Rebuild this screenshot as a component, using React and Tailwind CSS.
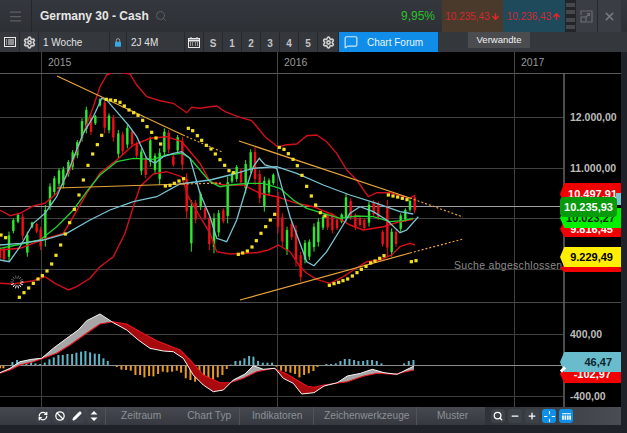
import { Menu, Search, Settings, MessageSquare, ArrowDown, ArrowUp, RefreshCw, Ban, Pencil, X, Minus, Plus } from 'lucide-react';

// chart data was read off 3x crops, so coords are crop px: left crop starts at x=0, right one at x=210
const L = (pts) => pts.map(([x, y]) => [x / 3, y / 3 + 70]);
const R = (pts) => pts.map(([x, y]) => [x / 3 + 210, y / 3 + 70]);
const P = (pts) => pts.map(([x, y]) => `${x.toFixed(1)},${y.toFixed(1)}`).join(' ');

const upper = [...L([[0, 420], [30, 437], [60, 430], [100, 408], [135, 400], [170, 370], [210, 300], [250, 190], [280, 110], [300, 50], [320, 15], [345, 5], [390, 12], [410, 45], [440, 80], [480, 92], [520, 100], [560, 128], [575, 112], [600, 115]]), ...R([[0, 110], [20, 108], [45, 125], [90, 142], [125, 152], [165, 200], [205, 232], [225, 225], [260, 222], [290, 197], [320, 195], [350, 215], [380, 250], [410, 300], [440, 330], [475, 380], [500, 368], [540, 368], [600, 385], [615, 375]])];
const lower = [...L([[0, 640], [40, 642], [100, 632], [135, 620], [165, 640], [205, 660], [230, 650], [270, 625], [300, 590], [340, 560], [375, 490], [400, 410], [420, 350], [460, 312], [500, 305], [545, 320], [565, 380], [600, 440]]), ...R([[0, 490], [20, 545], [60, 552], [100, 550], [140, 548], [175, 540], [205, 525], [240, 545], [270, 590], [290, 610], [320, 628], [360, 640], [400, 620], [430, 600], [470, 575], [510, 570], [545, 555], [570, 530], [600, 520], [615, 525]])];
const middle = [...L([[0, 540], [60, 535], [125, 510], [190, 490], [220, 440], [260, 370], [300, 310], [350, 270], [400, 225], [450, 205], [500, 200], [545, 215], [600, 280]]), ...R([[0, 335], [40, 345], [100, 345], [150, 370], [200, 380], [260, 400], [310, 410], [370, 435], [420, 465], [460, 480], [520, 470], [570, 455], [610, 448]])];
const green = [...L([[0, 535], [50, 525], [120, 510], [170, 470], [220, 420], [260, 365], [300, 315], [350, 275], [400, 265], [460, 268], [500, 255], [545, 250], [570, 265], [600, 300]]), ...R([[0, 335], [30, 350], [60, 345], [110, 340], [160, 340], [210, 355], [250, 390], [290, 415], [340, 430], [390, 445], [440, 438], [490, 440], [540, 455], [580, 452], [610, 445]])];
const fast = [...L([[0, 570], [28, 575], [60, 530], [100, 460], [135, 430], [170, 380], [210, 290], [250, 190], [280, 140], [305, 85], [320, 90], [350, 125], [385, 165], [410, 200], [440, 265], [465, 280], [490, 260], [520, 250], [545, 245], [570, 265], [600, 370]]), ...R([[0, 440], [20, 505], [50, 515], [80, 450], [110, 350], [130, 290], [148, 265], [165, 285], [200, 295], [215, 350], [240, 440], [270, 520], [290, 575], [312, 587], [350, 545], [390, 480], [420, 430], [450, 410], [490, 425], [530, 450], [570, 488], [590, 480], [625, 440]])];
const slow = [...L([[0, 525], [60, 520], [130, 510], [200, 490], [270, 450], [330, 420], [400, 395], [470, 380], [540, 342]]), ...R([[0, 330], [60, 315], [130, 295], [200, 290], [260, 310], [340, 345], [420, 375], [500, 400], [570, 425], [610, 432]])];

// x, top, bottom, g/r
const candles = [
  ...[[0, 530, 570, 'r'], [12, 530, 575, 'r'], [27, 485, 575, 'g'], [40, 445, 490, 'g'], [54, 430, 460, 'g'], [68, 430, 510, 'r'], [82, 485, 560, 'g'], [96, 455, 475, 'g'], [110, 458, 490, 'r'], [122, 470, 540, 'r'], [136, 405, 530, 'g'], [150, 340, 420, 'g'], [163, 318, 375, 'g'], [177, 295, 350, 'g'], [190, 290, 355, 'g'], [205, 270, 320, 'g'], [218, 240, 300, 'g'], [232, 210, 265, 'g'], [246, 145, 215, 'g'], [259, 110, 190, 'g'], [273, 135, 195, 'r'], [286, 135, 165, 'g'], [300, 85, 110, 'g'], [314, 85, 190, 'r'], [327, 130, 190, 'g'], [340, 135, 215, 'r'], [355, 180, 265, 'g'], [368, 185, 255, 'r'], [382, 165, 235, 'g'], [396, 180, 230, 'r'], [410, 215, 265, 'r'], [424, 235, 315, 'g'], [437, 260, 325, 'r'], [451, 200, 290, 'g'], [465, 250, 310, 'g'], [479, 235, 345, 'g'], [493, 175, 260, 'g'], [506, 180, 250, 'r'], [520, 255, 290, 'r'], [533, 195, 250, 'g'], [547, 200, 300, 'r'], [560, 310, 445, 'r'], [574, 390, 545, 'g'], [587, 390, 460, 'r'], [602, 365, 420, 'g'], [615, 410, 450, 'r'], [628, 430, 540, 'r']].map(([x, t, b, c]) => [x / 3, t / 3 + 70, b / 3 + 70, c]),
  ...[[12, 430, 550, 'g'], [26, 420, 500, 'g'], [40, 415, 460, 'r'], [53, 320, 460, 'g'], [66, 305, 340, 'g'], [80, 285, 335, 'g'], [93, 295, 345, 'r'], [107, 270, 370, 'g'], [122, 238, 310, 'g'], [135, 232, 345, 'r'], [149, 300, 400, 'r'], [163, 320, 425, 'g'], [177, 325, 375, 'g'], [190, 310, 345, 'g'], [204, 365, 490, 'r'], [217, 430, 530, 'r'], [231, 470, 555, 'g'], [245, 455, 510, 'r'], [258, 465, 590, 'r'], [272, 545, 635, 'r'], [285, 510, 580, 'g'], [298, 508, 570, 'g'], [312, 460, 545, 'g'], [325, 445, 530, 'g'], [339, 435, 480, 'g'], [353, 430, 480, 'r'], [367, 430, 490, 'r'], [381, 445, 480, 'r'], [395, 430, 460, 'g'], [408, 372, 455, 'g'], [422, 385, 450, 'r'], [436, 430, 480, 'r'], [450, 440, 470, 'r'], [463, 445, 480, 'r'], [477, 395, 470, 'g'], [491, 390, 440, 'r'], [505, 395, 450, 'r'], [518, 480, 530, 'r'], [532, 390, 560, 'r'], [545, 475, 560, 'g'], [558, 480, 530, 'r'], [572, 430, 485, 'g'], [586, 415, 455, 'g'], [600, 388, 425, 'g'], [614, 375, 430, 'r']].map(([x, t, b, c]) => [x / 3 + 210, t / 3 + 70, b / 3 + 70, c]),
];

const dots = [
  ...L([[3, 495], [17, 503], [58, 682], [72, 668], [86, 654], [100, 640], [114, 627], [127, 617], [141, 603], [155, 582], [168, 556], [182, 525], [196, 492], [209, 458], [223, 418], [237, 375], [250, 330], [264, 286], [278, 252], [292, 224], [305, 196], [319, 88], [332, 90], [346, 92], [360, 97], [373, 108], [387, 120], [401, 128], [414, 136], [428, 151], [441, 170], [455, 187], [468, 204], [482, 222], [496, 348], [510, 346], [523, 340], [537, 333], [551, 326], [565, 175], [578, 182], [592, 197], [605, 211], [619, 226]]),
  ...R([[3, 237], [16, 252], [30, 269], [44, 286], [57, 302], [71, 308], [85, 553], [98, 549], [112, 543], [126, 531], [139, 512], [153, 490], [167, 470], [181, 450], [194, 433], [208, 232], [222, 238], [235, 251], [249, 268], [262, 287], [276, 316], [290, 349], [304, 378], [317, 405], [331, 428], [345, 438], [358, 646], [372, 641], [386, 637], [399, 632], [413, 627], [427, 618], [441, 608], [454, 598], [468, 589], [482, 579], [495, 573], [509, 565], [522, 557], [535, 375], [549, 378], [563, 381], [577, 385], [591, 389], [604, 575], [618, 572]]),
];

// MACD crops: x/3, y/3+300, second crop continues at 942
const M = (pts) => pts.map(([x, y]) => [x / 3, y / 3 + 300]);
const macd = M([[0, 218], [30, 205], [60, 185], [95, 178], [125, 175], [160, 145], [200, 115], [235, 90], [260, 62], [300, 42], [340, 68], [380, 90], [415, 120], [450, 145], [490, 153], [520, 155], [550, 175], [580, 225], [610, 255], [640, 275], [670, 270], [700, 240], [735, 222], [760, 197], [790, 208], [825, 205], [850, 235], [880, 250], [905, 282], [942, 278], [972, 258], [1012, 248], [1042, 228], [1082, 220], [1117, 208], [1152, 218], [1192, 223], [1242, 198]]);
const signal = M([[0, 220], [30, 210], [60, 195], [100, 185], [130, 175], [170, 160], [210, 135], [260, 100], [300, 72], [340, 65], [380, 72], [420, 95], [470, 122], [540, 150], [570, 180], [610, 225], [660, 248], [690, 248], [730, 235], [770, 215], [820, 205], [860, 222], [890, 240], [920, 258], [942, 262], [972, 255], [1042, 245], [1092, 228], [1132, 220], [1182, 223], [1242, 210]]);

const blueBars = [[37, 186], [51, 180], [65, 183], [79, 185], [93, 185], [106, 190], [120, 192], [134, 188], [148, 178], [161, 172], [175, 165], [188, 165], [202, 162], [216, 162], [229, 158], [243, 155], [256, 153], [270, 157], [284, 161], [297, 162], [310, 175], [323, 183], [693, 194], [706, 183], [720, 182], [733, 175], [747, 168], [760, 170], [774, 183], [788, 188], [802, 188], [816, 188], [979, 192], [993, 192], [1007, 190], [1021, 183], [1034, 177], [1048, 177], [1062, 180], [1075, 183], [1089, 183], [1102, 180], [1116, 180], [1130, 183], [1144, 190], [1212, 190], [1226, 183], [1240, 180]];
const orangeBars = [[0, 205], [10, 205], [350, 201], [364, 209], [378, 210], [392, 212], [406, 225], [420, 225], [433, 232], [447, 228], [460, 229], [474, 222], [488, 215], [502, 217], [516, 215], [530, 212], [543, 218], [557, 235], [571, 240], [585, 245], [598, 240], [612, 240], [625, 245], [639, 245], [653, 232], [667, 225], [680, 207], [829, 200], [843, 212], [857, 215], [871, 218], [885, 222], [898, 232], [912, 225], [926, 220], [940, 213], [952, 201]];

const ChartDrawing = () => (
  <svg viewBox="0 73 621 334" className="block w-[621px] h-[334px]">
    <defs>
      <clipPath id="macdGray">
        <rect x="0" y="300" width="113" height="110" />
        <rect x="232" y="300" width="42" height="110" />
        <rect x="337" y="300" width="100" height="110" />
      </clipPath>
      <clipPath id="macdRed">
        <rect x="113" y="300" width="119" height="110" />
        <rect x="274" y="300" width="63" height="110" />
      </clipPath>
    </defs>

    {[117, 168, 218, 269, 334, 396].map((y) => <line key={y} x1="0" x2="564" y1={y + 0.5} y2={y + 0.5} stroke="#3f3f3f" />)}
    {[41, 277, 514].map((x) => <line key={x} x1={x + 0.5} x2={x + 0.5} y1="73" y2="407" stroke="#3f3f3f" />)}
    <line x1="0" x2="621" y1="73.5" y2="73.5" stroke="#5a5a5a" />
    <line x1="0" x2="621" y1="302.5" y2="302.5" stroke="#4a4a4a" />
    <line x1="0" x2="564" y1="206.5" y2="206.5" stroke="#a0a0a0" />
    <line x1="0" x2="564" y1="365.5" y2="365.5" stroke="#8e8e8e" />
    <line x1="564" x2="564" y1="73" y2="407" stroke="#666" strokeWidth="1.5" />

    {candles.map(([x, t, b, c], i) => (
      <g key={i} fill={c === 'g' ? '#2ee82e' : '#ee1018'}>
        <rect x={x - 0.5} y={t} width="1" height={b - t} />
        <rect x={x - 1.2} y={t + (b - t) * 0.12} width="2.4" height={(b - t) * 0.72} />
      </g>
    ))}

    <polyline points={P(upper)} fill="none" stroke="#d0101a" strokeWidth="1.4" />
    <polyline points={P(lower)} fill="none" stroke="#d0101a" strokeWidth="1.4" />
    <polyline points={P(middle)} fill="none" stroke="#e0101a" strokeWidth="1.4" />
    <polyline points={P(green)} fill="none" stroke="#22d030" strokeWidth="1.3" />
    <polyline points={P(fast)} fill="none" stroke="#78c4d2" strokeWidth="1.3" />
    <polyline points={P(slow)} fill="none" stroke="#78c4d2" strokeWidth="1.3" />

    <g stroke="#e8a33c" strokeWidth="1.2" fill="none">
      <line x1="57" y1="76" x2="183" y2="135" />
      <line x1="183" y1="135" x2="222" y2="152" strokeDasharray="2 2" />
      <line x1="57" y1="188" x2="183" y2="184" />
      <line x1="183" y1="184" x2="222" y2="183" strokeDasharray="2 2" />
      <line x1="239" y1="141" x2="410" y2="198" />
      <line x1="410" y1="198" x2="463" y2="217" strokeDasharray="2 2" />
      <line x1="240" y1="300" x2="410" y2="253" />
      <line x1="410" y1="253" x2="463" y2="239" strokeDasharray="2 2" />
    </g>

    {dots.map(([x, y], i) => <rect key={i} x={x - 1.6} y={y - 1.6} width="3.2" height="3.2" fill="#f4e020" />)}

    {/* loading spinner */}
    {Array.from({ length: 14 }).map((_, i) => {
      const a = (i / 14) * Math.PI * 2;
      return (
        <line
          key={i}
          x1={17 + Math.cos(a) * 3.5}
          y1={282 + Math.sin(a) * 3.5}
          x2={17 + Math.cos(a) * 6.5}
          y2={282 + Math.sin(a) * 6.5}
          stroke={i < 7 ? '#fff' : '#666'}
          strokeWidth="1"
        />
      );
    })}

    {blueBars.map(([x, t]) => <rect key={x} x={x / 3 - 0.9} y={t / 3 + 300} width="2" height={365 - t / 3 - 300} fill="#5fb4c6" />)}
    {orangeBars.map(([x, b]) => <rect key={x} x={x / 3 - 0.9} y="365.5" width="2" height={b / 3 + 300 - 365.5} fill="#e89a24" />)}

    <polygon points={P([...macd, ...[...signal].reverse()])} fill="#a6a6a6" clipPath="url(#macdGray)" />
    <polygon points={P([...macd, ...[...signal].reverse()])} fill="#a80a0e" clipPath="url(#macdRed)" />
    <polyline points={P(signal)} fill="none" stroke="#e8141c" strokeWidth="1.1" />
    <polyline points={P(macd)} fill="none" stroke="#f4f4f4" strokeWidth="1" />
  </svg>
);

const ToolCell = ({ className = '', children }) => (
  <div className={`flex items-center justify-center h-full border-r border-[#26282c] shrink-0 ${className}`}>{children}</div>
);

const SmallBtn = ({ children, blue }) => (
  <div className={`w-[14px] h-[14px] rounded-[3px] flex items-center justify-center ${blue ? 'bg-[#0f8fe6]' : 'bg-[#3d4248]'}`}>{children}</div>
);

const Tag = ({ className = '', children }) => (
  <div
    className={`absolute left-[560px] w-[61px] flex items-center justify-end text-[11px] font-bold [clip-path:polygon(7%_0,100%_0,100%_100%,7%_100%,0_50%)] ${className}`}
  >
    {children}
  </div>
);

const AxisLabel = ({ className = '', children }) => (
  <span className={`absolute left-[570px] text-[10.5px] font-bold text-[#bcbcbc] ${className}`}>{children}</span>
);

const App = () => {
  return (
    <div className="w-[627px] h-[433px] overflow-hidden flex flex-col bg-[#1f2329] font-['Liberation_Sans',Arial,sans-serif]">
      {/* title bar */}
      <div className="h-8 shrink-0 flex items-stretch bg-gradient-to-b from-[#34373d] to-[#2d3035]">
        <div className="w-8 flex items-center justify-center border-r border-[#24262a]">
          <Menu className="w-[15px] h-[15px] text-[#5c5f64]" />
        </div>
        <div className="pl-2 flex items-center gap-[6px]">
          <span className="text-[12px] font-bold text-[#e6e6e6]">Germany 30 - Cash</span>
          <Search className="w-3 h-3 text-[#5c5f64]" />
        </div>
        <div className="flex-1" />
        <div className="flex items-center pr-[7px] text-[12px] text-[#2bc22b]">9,95%</div>
        <div className="w-[61px] flex items-center justify-center gap-[1px] bg-[#4a3a2c] text-[10px] text-[#d02a2e]">
          10.235,43<ArrowDown className="w-[9px] h-[9px] text-[#e0282c]" strokeWidth={4} />
        </div>
        <div className="w-[62px] flex items-center justify-center gap-[1px] bg-[#1e4a5c] text-[10px] text-[#d02a2e]">
          10.236,43<ArrowUp className="w-[9px] h-[9px] text-[#e0282c]" strokeWidth={4} />
        </div>
        <div className="w-[11px] flex flex-col justify-evenly px-[1px] bg-[#232529]">
          <div className="h-[4px] bg-[#45484d]" />
          <div className="h-[4px] bg-[#45484d]" />
          <div className="h-[4px] bg-[#45484d]" />
          <div className="h-[4px] bg-[#45484d]" />
        </div>
        <div className="w-[22px] flex items-center justify-center border-r border-[#26282c] bg-[#3a3d43]">
          <svg viewBox="0 0 13 13" className="w-[13px] h-[13px] stroke-[#686b70]" fill="none" strokeWidth="1.2">
            <path d="M1 5V1h11v11H7" />
            <rect x="1" y="7" width="5" height="5" />
            <path d="M6 7l3.500-3.500M7 3.500h2.500V6" />
          </svg>
        </div>
        <div className="w-[23px] flex items-center justify-center bg-[#3a3d43]">
          <X className="w-[13px] h-[13px] text-[#777a7f]" strokeWidth={3} />
        </div>
        <div className="w-[6px]" />
      </div>

      {/* toolbar */}
      <div className="h-5 shrink-0 flex items-stretch bg-[#34373c] text-[10px] text-[#e2e2e2]">
        <ToolCell className="w-5">
          <svg viewBox="0 0 12 10" className="w-[12px] h-[10px] stroke-[#e8e8e8]" fill="none">
            <rect x="0.500" y="0.500" width="11" height="9" />
            <path d="M2 3h1M4 3h6M2 5h1M4 5h6M2 7h1M4 7h6" />
          </svg>
        </ToolCell>
        <ToolCell className="w-[19px]"><Settings className="w-[13px] h-[13px] text-[#d0d0d0]" strokeWidth={3} /></ToolCell>
        <ToolCell className="w-[71px] !justify-start pl-1">1 Woche</ToolCell>
        <ToolCell className="w-[17px]">
          <svg viewBox="0 0 7 10" className="w-[6px] h-[9px]">
            <path d="M1.500 4.500V2.500a2 2 0 0 1 4 0v2" fill="none" stroke="#9fb4c0" />
            <rect x="0" y="4" width="7" height="6" rx="1" fill="#38a8e4" />
          </svg>
        </ToolCell>
        <ToolCell className="w-[58px] !justify-start pl-1">2J 4M</ToolCell>
        <ToolCell className="w-[19px]">
          <svg viewBox="0 0 12 11" className="w-[12px] h-[11px] stroke-[#e8e8e8]" fill="none">
            <path d="M3 0v2M9 0v2" />
            <rect x="0.500" y="1.500" width="11" height="9" />
            <path d="M1 3.500h10" strokeWidth="2" />
            <path d="M2 6h1M4 6h1M7 6h1M9 6h1M2 8h1M4 8h1M7 8h1M9 8h1" />
          </svg>
        </ToolCell>
        {['S', '1', '2', '3', '4', '5'].map((t) => (
          <ToolCell key={t} className="w-[19px] font-bold text-[#c4c4c4] pt-[2px]">{t}</ToolCell>
        ))}
        <ToolCell className="w-[21px]"><Settings className="w-[13px] h-[13px] text-[#d0d0d0]" strokeWidth={3} /></ToolCell>
        <div className="w-[99px] flex items-center gap-[9px] pl-[5px] bg-[#0f8de8] text-[#e8f4ff]">
          <MessageSquare className="w-[14px] h-[14px] text-[#cfe8fa]" />
          <span>Chart Forum</span>
        </div>
        <div className="w-[30px]" />
        <div className="w-[62px] h-4 flex items-center justify-center bg-[#4a4c50] text-[9.5px] font-medium text-[#f2f2f2]">Verwandte</div>
      </div>

      <div className="flex-1 flex items-start">
        <div className="w-[621px] flex flex-col">
          {/* years */}
          <div className="h-[21px] flex items-center bg-black text-[10.5px] text-[#9a9a9a]">
            <div className="w-[41px] h-full" />
            <div className="w-[236px] h-full flex items-center pl-[6px] border-l border-[#444]">2015</div>
            <div className="w-[237px] h-full flex items-center pl-[6px] border-l border-[#444]">2016</div>
            <div className="flex-1 h-full flex items-center pl-[6px] border-l border-[#444]">2017</div>
          </div>

          {/* chart + overlays */}
          <div className="relative h-[334px] bg-black overflow-hidden">
            <ChartDrawing />
            <AxisLabel className="top-[37px]">12.000,00</AxisLabel>
            <AxisLabel className="top-[88px]">11.000,00</AxisLabel>
            <AxisLabel className="top-[254px]">400,00</AxisLabel>
            <AxisLabel className="top-[316px]">-400,00</AxisLabel>
            <span className="absolute left-[454px] top-[185px] text-[10.5px] text-[#8a8a8a] tracking-[0.3px] whitespace-nowrap">Suche abgeschlossen</span>

            <Tag className="top-[110px] h-[22px] pr-1 bg-[#f00000] text-white">10.497,91</Tag>
            <div className="absolute left-[616px] top-[120px] w-[5px] h-3 bg-[#7cc4d4]" />
            <Tag className="top-[148px] h-4 pr-2 bg-[#f00000] text-white">9.816,45</Tag>
            <Tag className="top-[135px] h-5 pr-[6px] bg-[#00f000] text-[#082008]">10.023,27</Tag>
            <div className="absolute left-[560px] top-[124px] w-[57px] h-5 rounded-[4px] bg-[#079a0b] flex items-center justify-center text-[11px] font-bold text-white">10.235,93</div>
            <Tag className="top-[192px] h-[7px] bg-[#f00000]" />
            <Tag className="top-[174px] h-5 pr-2 bg-[#ffee00] text-black">9.229,49</Tag>
            <Tag className="top-[292px] h-[18px] pr-[10px] bg-[#f00000] text-white">-102,97</Tag>
            <Tag className="top-[279px] h-5 pr-[9px] bg-[#68bccb] text-[#10242a]">46,47</Tag>
            <div className="absolute left-[560px] top-[295px] w-[6px] h-[3px] -rotate-45 bg-white" />
          </div>

          {/* bottom bar */}
          <div className="h-[18px] flex items-center bg-gradient-to-b from-[#464a50] to-[#363a40] text-[10.2px] text-[#8b9096] whitespace-nowrap">
            <div className="w-[106px] h-full pl-9 flex items-center gap-[3px] border-r border-[#50545a]">
              <SmallBtn><RefreshCw className="w-[10px] h-[10px] text-white" strokeWidth={3} /></SmallBtn>
              <SmallBtn><Ban className="w-[10px] h-[10px] text-white" strokeWidth={3} /></SmallBtn>
              <SmallBtn><Pencil className="w-[10px] h-[10px] text-white fill-white" /></SmallBtn>
              <SmallBtn>
                <svg viewBox="0 0 10 10" className="w-[10px] h-[10px] fill-white"><path d="M5 0l3.500 3.500h-7zM5 10L1.500 6.500h7z" /></svg>
              </SmallBtn>
            </div>
            <div className="w-[134px] h-full pl-[15px] flex items-center gap-[26px] border-r border-[#50545a]">
              <span>Zeitraum</span>
              <span>Chart Typ</span>
            </div>
            <div className="w-[74px] h-full pl-3 flex items-center border-r border-[#50545a]">Indikatoren</div>
            <div className="w-[103px] h-full pl-[10px] flex items-center border-r border-[#50545a]">Zeichenwerkzeuge</div>
            <div className="w-[68px] h-full pl-5 flex items-center">Muster</div>
            <div className="flex-1 h-full pl-[6px] flex items-center gap-[3px] bg-gradient-to-r from-[#2f3338] to-[#4a4e54]">
              <SmallBtn><Search className="w-[10px] h-[10px] text-white" strokeWidth={3} /></SmallBtn>
              <SmallBtn><Minus className="w-[10px] h-[10px] text-white" strokeWidth={3} /></SmallBtn>
              <SmallBtn><Plus className="w-[10px] h-[10px] text-white" strokeWidth={3} /></SmallBtn>
              <SmallBtn blue>
                <svg viewBox="0 0 10 10" className="w-[11px] h-[11px] stroke-white" strokeWidth="1"><path d="M5 0v3M5 7v3M0 5h3M7 5h3" /></svg>
              </SmallBtn>
              <SmallBtn blue>
                <svg viewBox="0 0 10 10" className="w-[11px] h-[11px] fill-white"><path d="M1 2h8v1H1zM1 4h1.500v4H1zM3.200 4h1.500v4H3.200zM5.400 4h1.500v4H5.400zM7.500 4H9v4H7.500z" /></svg>
              </SmallBtn>
            </div>
          </div>
        </div>
      </div>
    </div>
  );
};

export default App;
